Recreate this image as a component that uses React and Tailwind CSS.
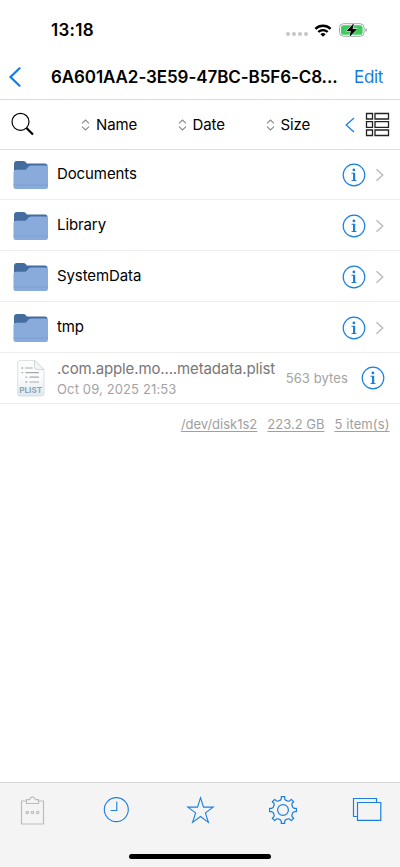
const BLUE = '#1a7fe0';

function WifiIcon() {
  return (
    <svg className="block" width="18" height="13" viewBox="0 0 18 13" fill="none" stroke="#000" strokeWidth="2.4">
      <path d="M1.400 4.900a10.900 10.900 0 0 1 15.200 0" />
      <path d="M4.300 8a6.800 6.800 0 0 1 9.400 0" />
      <path d="M9 12.800 6.400 10.200a3.800 3.800 0 0 1 5.200 0z" fill="#000" stroke="none" />
    </svg>
  );
}

function BatteryIcon() {
  return (
    <svg className="block" width="29" height="16" viewBox="0 0 29 16">
      <rect x="0.5" y="1.7" width="24.6" height="12.6" rx="4" fill="#fff" stroke="#a3a8a4" />
      <rect x="2" y="3.2" width="21.6" height="9.6" rx="2.6" fill="#3fcb5f" />
      <path d="M26.4 6v4c1-.3 1.500-1.100 1.500-2s-.5-1.700-1.500-2z" fill="#a8a8a8" />
      <path d="M15 1 7.500 8.900h4.300l-1.300 6.200 7.600-8.200h-4.500z" fill="#000" stroke="#fff" strokeWidth="1" paintOrder="stroke" strokeLinejoin="round" />
    </svg>
  );
}

function Sorter({ label, className }) {
  return (
    <div className={'flex items-center gap-[6px] ' + className}>
      <svg className="block shrink-0" width="9" height="12" viewBox="0 0 9 12" fill="none" stroke="#888" strokeWidth="1.100">
        <path d="M1 4.300 4.500 1 8 4.300M1 7.700 4.500 11 8 7.700" />
      </svg>
      <span>{label}</span>
    </div>
  );
}

function Folder() {
  return (
    <svg className="block shrink-0" width="36" height="30" viewBox="0 0 36 30">
      <path d="M1 12V4Q1 1 4 1h6.500q1.800 0 2.700 1.500l.5.900h18.300q2.500 0 2.500 2.600V12z" fill="#446c9f" />
      <path d="M.5 12.500q0-2.700 2.700-2.700h8.300q1.600 0 2.500-1.300l1.100-1.500q1-1.500 2.800-1.500H32.500q2.500 0 2.500 2.500v18.500q0 2.500-2.500 2.500H3q-2.500 0-2.500-2.500z" fill="#88abdb" />
      <path d="M.5 25h34.500" stroke="#7a9fd2" strokeWidth="1" />
    </svg>
  );
}

function PlistIcon() {
  return (
    <svg className="block shrink-0" width="28" height="37" viewBox="0 0 28 37">
      <defs>
        <linearGradient id="sheet" x1="0" y1="0" x2="0" y2="1">
          <stop offset="0.5" stopColor="#fbfcfc" />
          <stop offset="1" stopColor="#dfe9f0" />
        </linearGradient>
      </defs>
      <path d="M3 .5h14.500L27 9.500V33.500q0 2.500-2.500 2.500H3Q.7 36 .7 33.500V3Q.7.500 3 .500z" fill="url(#sheet)" stroke="#d3d9dc" strokeWidth=".8" />
      <path d="M17.500.500V7q0 2.500 2.500 2.500h7z" fill="#f4f6f6" stroke="#cbd0d3" strokeWidth=".8" />
      <path d="M8 8h7.500M8.500 12.600H22M12.500 17.200H22M12.500 22H22" stroke="#a7aaab" strokeWidth="1.200" />
      <path d="M4.500 8h1.700M4.500 12.600h1.700M8.500 17.200h1.700M8.500 22h1.700" stroke="#a7aaab" strokeWidth="1.300" />
      <text x="2.200" y="33" textLength="23" lengthAdjust="spacingAndGlyphs" fontFamily="Inter, sans-serif" fontWeight="700" fontSize="8" fill="#8fa5b3">PLIST</text>
    </svg>
  );
}

function InfoIcon() {
  return (
    <svg className="block shrink-0" width="24" height="24" viewBox="0 0 24 24">
      <circle cx="12" cy="12" r="10.800" fill="none" stroke={BLUE} strokeWidth="1.200" />
      <circle cx="11.900" cy="6.900" r="1.400" fill={BLUE} />
      <path d="M9.500 9.700h3.700v7.300h1.200v1H9.600v-1H11v-6.300H9.500z" fill={BLUE} />
    </svg>
  );
}

function FolderRow({ name }) {
  return (
    <div className="group flex h-[51px] items-center border-b border-[#ededed] pl-[13px] pr-[15px] pt-px first:h-[50px] first:pt-0">
      <Folder />
      <span className="ml-2 flex-1 pb-[2px] text-[15px] leading-5 tracking-[-0.1px] text-black">{name}</span>
      <InfoIcon />
      <svg className="ml-[9px] block" width="10" height="14" viewBox="0 0 10 14" fill="none" stroke="#bcbcbf" strokeWidth="1.500">
        <path d="m1.500 1.300 6.200 5.700-6.200 5.700" />
      </svg>
    </div>
  );
}

function gearPath() {
  const f = (a, r) => (14 + r * Math.cos(a)).toFixed(2) + ' ' + (14 + r * Math.sin(a)).toFixed(2);
  let d = '';
  for (let i = 0; i < 8; i++) {
    const base = (i * Math.PI) / 4 - Math.PI / 2;
    d += (i ? 'L' : 'M') + f(base - 0.25, 10.2);
    d += 'L' + f(base - 0.15, 11.3) + 'L' + f(base - 0.13, 13.5);
    d += 'L' + f(base + 0.13, 13.5) + 'L' + f(base + 0.15, 11.3);
    d += 'L' + f(base + 0.25, 10.2);
  }
  return d + 'Z';
}

function TabBar() {
  return (
    <nav className="flex h-[85px] flex-col items-center border-t border-[#d5d5d5] bg-[#f4f4f4]">
      <div className="flex h-[71px] w-full items-start justify-between pl-[18px] pr-[18px] pt-[12px]">
        <svg className="block" width="30" height="32" viewBox="0 0 30 32" fill="none" stroke="#bdbdbd" strokeWidth="1.200">
          <path d="M8.500 6H3.500v23h22V6H20.500" />
          <path d="M8.500 8.500V4.600h2.800q.6 0 .7-.7a2.600 2.900 0 0 1 5 0q.1.700.7.700h2.800v3.900z" />
          <circle cx="9.300" cy="17.500" r="1.200" /><circle cx="14.500" cy="17.500" r="1.200" /><circle cx="19.700" cy="17.500" r="1.200" />
        </svg>
        <svg className="block" width="30" height="32" viewBox="0 0 30 32" fill="none" stroke={BLUE} strokeWidth="1.100">
          <circle cx="14.300" cy="14.600" r="12" /><path d="M14.800 6.500v9H8.500" />
        </svg>
        <svg className="block" width="30" height="32" viewBox="0 0 30 32" fill="none" stroke={BLUE} strokeWidth="1.100">
          <path d="m15.500 2.700 3 9.400h9.700l-7.800 5.800 3 9.500-7.900-5.900-7.900 5.900 3-9.500-7.800-5.800h9.700z" />
        </svg>
        <svg className="block" width="30" height="32" viewBox="0 0 30 32" fill="none" stroke={BLUE} strokeWidth="1.200">
          <g transform="translate(0 1)"><path d={gearPath()} strokeLinejoin="round" /><circle cx="14" cy="14" r="5.400" /></g>
        </svg>
        <svg className="block" width="30" height="32" viewBox="0 0 30 32" fill="none" stroke={BLUE} strokeWidth="1.200">
          <path d="M5.500 21.500H1.500v-18h23V7.500" /><path d="M5.500 7.500h23.300v17.800H5.500z" />
        </svg>
      </div>
      <div className="h-[5px] w-[142px] rounded-full bg-black" />
    </nav>
  );
}

export default function App() {
  return (
    <div className="flex h-[867px] w-[400px] flex-col overflow-hidden bg-white font-['Inter',sans-serif] text-black">
      <header className="h-[100px] shrink-0 border-b border-[#dcdcdc]">
        <div className="flex h-[55px] items-center pl-[51px] pr-[32px] pt-[5px]">
          <span className="flex-1 text-[17px] font-semibold leading-5 tracking-[0.3px]">13:18</span>
          <div className="mr-[6px] flex gap-[2px] pt-[8px]">
            <i className="size-[4px] rounded-full bg-[#c6c6c6]" />
            <i className="size-[4px] rounded-full bg-[#c6c6c6]" />
            <i className="size-[4px] rounded-full bg-[#c6c6c6]" />
            <i className="size-[4px] rounded-full bg-[#c6c6c6]" />
          </div>
          <WifiIcon />
          <div className="ml-[7px]"><BatteryIcon /></div>
        </div>
        <div className="flex h-[44px] items-center">
          <svg className="ml-[8px] block" width="14" height="20" viewBox="0 0 14 20" fill="none" stroke="#147ce5" strokeWidth="2.200" strokeLinecap="round">
            <path d="M11.500 1.300 2.500 10l9 8.700" />
          </svg>
          <span className="ml-[29px] w-[303px] whitespace-nowrap text-[17px] font-semibold leading-6 tracking-[-0.09px]">6A601AA2-3E59-47BC-B5F6-C8...</span>
          <span className="text-[17px] leading-6 tracking-[-0.3px] text-[#147ce5]">Edit</span>
        </div>
      </header>
      <div className="flex h-[50px] shrink-0 items-center border-b border-[#dfdfdf] text-[15px] leading-5 tracking-[-0.1px]">
        <svg className="ml-[11px] block" width="25" height="25" viewBox="0 0 25 25" fill="none" stroke="#000">
          <circle cx="9.500" cy="9.800" r="8.500" strokeWidth="1.200" /><path d="m15.500 16 6.500 6.500" strokeWidth="2.200" />
        </svg>
        <Sorter label="Name" className="ml-[45px] w-[96.5px]" />
        <Sorter label="Date" className="w-[88px]" />
        <Sorter label="Size" className="w-[79.5px]" />
        <svg className="block" width="10" height="16" viewBox="0 0 10 16" fill="none" stroke={BLUE} strokeWidth="1.300">
          <path d="M9 1 1.200 8 9 15" />
        </svg>
        <svg className="ml-[10px] block" width="25" height="25" viewBox="0 0 25 25" fill="none" stroke="#222" strokeWidth="1.300">
          <path d="M1.500 1.500h6v5.500h-6zM10 1.500h13.500v5.500H10zM1.500 9.700h6v5.600h-6zM10 9.700h13.500v5.600H10zM1.500 18h6v5.500h-6zM10 18h13.500v5.500H10z" />
        </svg>
      </div>
      <main className="flex-1">
        {['Documents', 'Library', 'SystemData', 'tmp'].map((name) => <FolderRow key={name} name={name} />)}
        <div className="flex h-[51px] items-center border-b border-[#ededed] pl-[17px] pr-[15px]">
          <PlistIcon />
          <div className="ml-[12px] flex-1 whitespace-nowrap pt-[2px]">
            <div className="text-[15px] leading-5 tracking-[-0.13px] text-[#777]">.com.apple.mo....metadata.plist</div>
            <div className="text-[13px] leading-5 tracking-[0.13px] text-[#a3a3a3]">Oct 09, 2025 21:53</div>
          </div>
          <span className="mr-[13px] pt-[2px] text-[13px] tracking-[0.1px] text-[#a3a3a3]">563 bytes</span>
          <InfoIcon />
        </div>
        <div className="flex justify-end gap-[10px] pr-[10.5px] pt-[10px] text-[13px] leading-5 text-[#a0a0a0] underline underline-offset-2">
          <span>/dev/disk1s2</span><span>223.2 GB</span><span className="tracking-[0.1px]">5 item(s)</span>
        </div>
      </main>
      <TabBar />
    </div>
  );
}
